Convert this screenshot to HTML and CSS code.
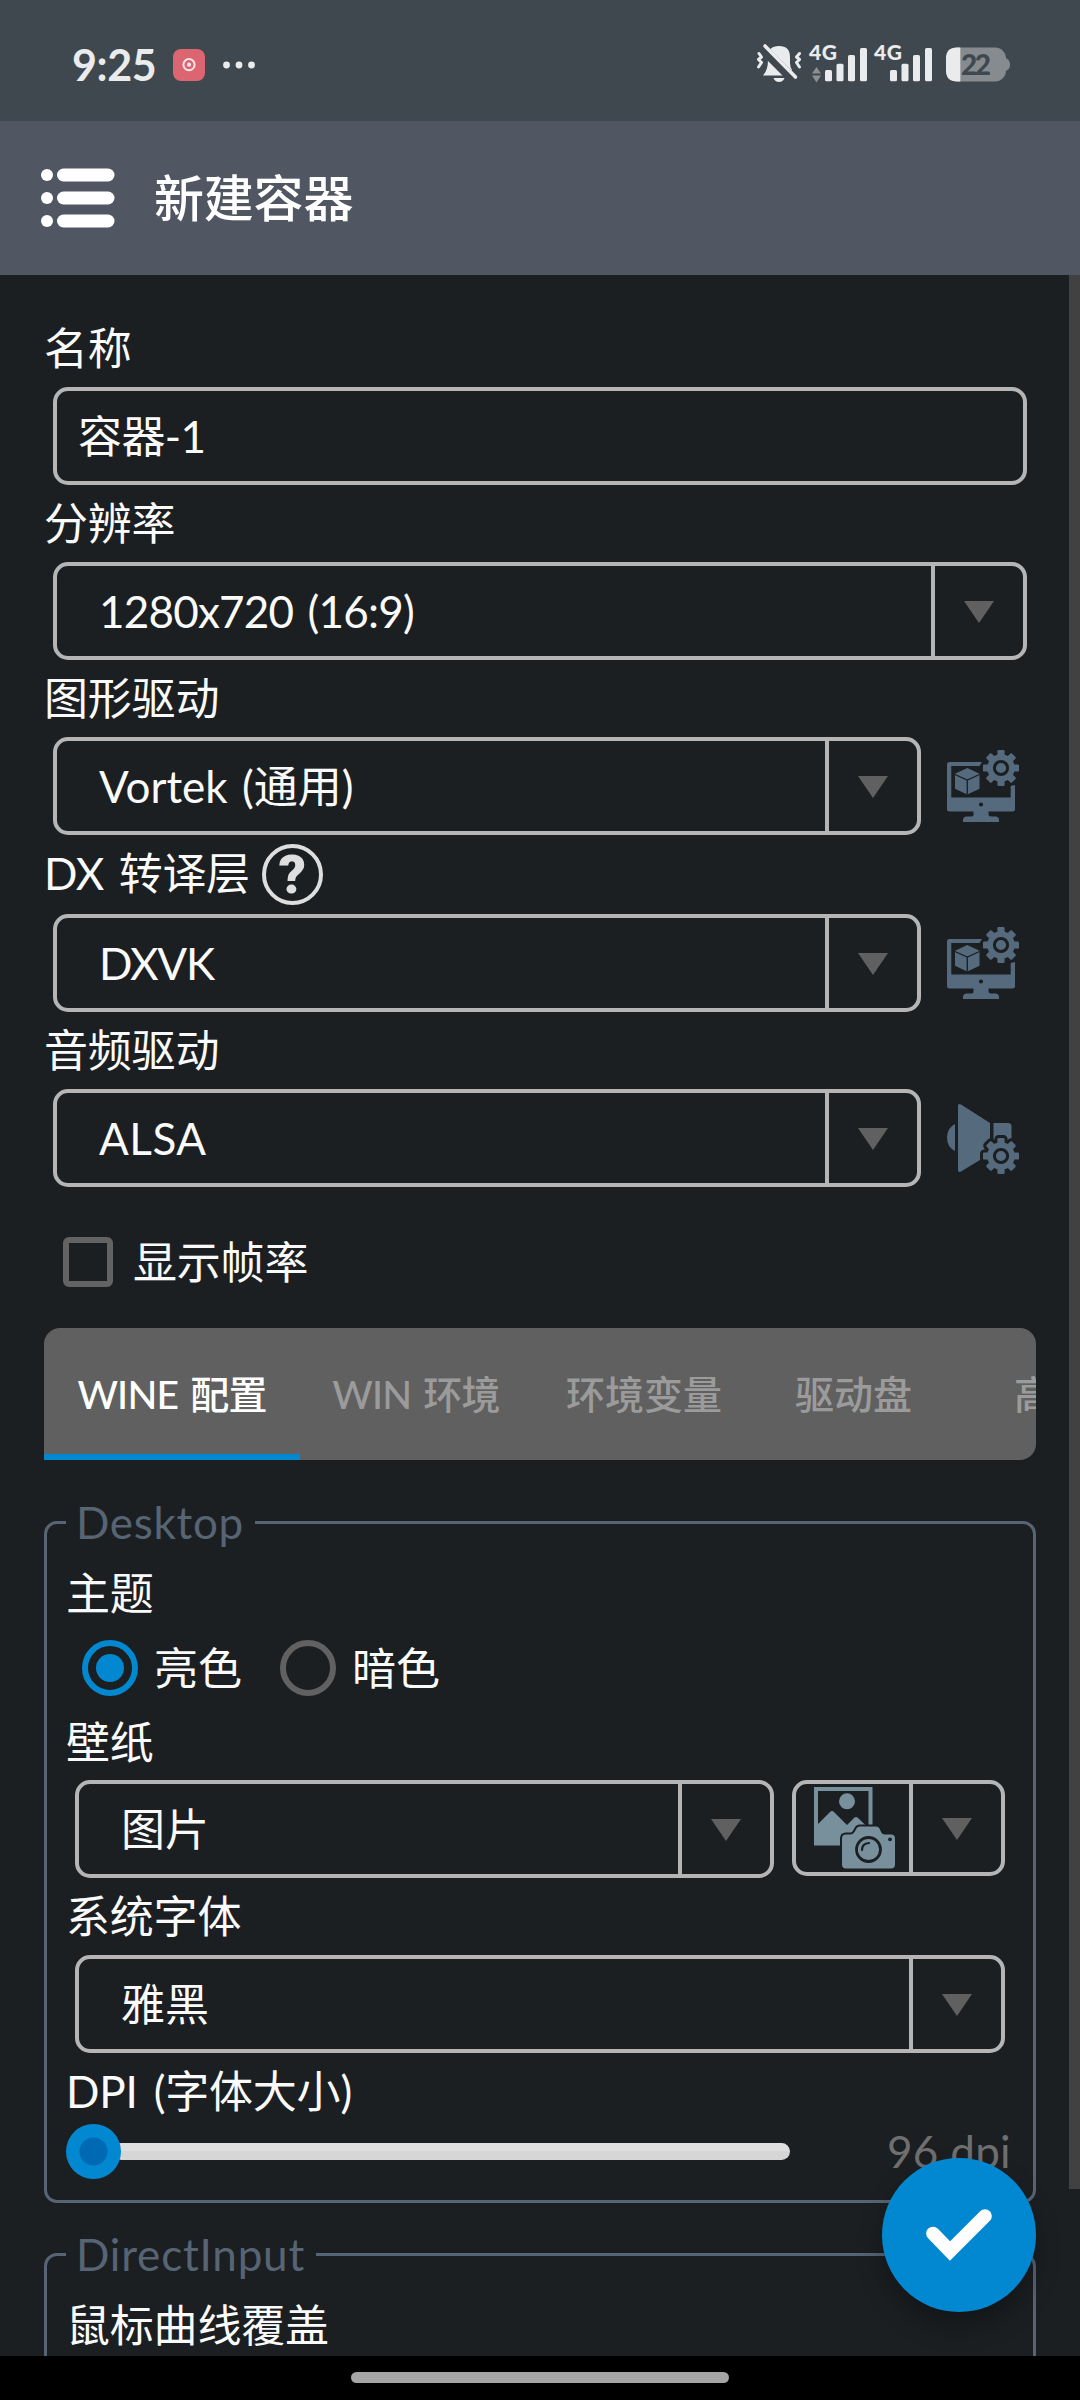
FILE: index.html
```html
<!DOCTYPE html>
<html lang="zh-CN">
<head>
<meta charset="utf-8">
<title>新建容器</title>
<link rel="stylesheet" href="styles.css">
</head>
<body>
<svg class="defs" width="0" height="0">
  <defs>
    <g id="gear">
      <rect x="-3.6" y="-18" width="7.2" height="36" rx="1.2"/>
      <rect x="-3.6" y="-18" width="7.2" height="36" rx="1.2" transform="rotate(45)"/>
      <rect x="-3.6" y="-18" width="7.2" height="36" rx="1.2" transform="rotate(90)"/>
      <rect x="-3.6" y="-18" width="7.2" height="36" rx="1.2" transform="rotate(135)"/>
      <circle r="13.8"/>
      <circle r="6.6" fill="#566a7d" stroke="#1b1f22" stroke-width="3"/>
    </g>
    <symbol id="display-settings" viewBox="0 0 72 72">
      <path d="M2.5 12H35L32.5 16H4.3V47.5H63.7V36L68 35V59Q68 61.5 65.5 61.5H41.5V65Q42 66.500 45 66.500H49Q52 67 52 70V72H16V70Q16 67 19 66.500H23Q26.500 66.500 26.500 65V61.500H2.500Q0 61.500 0 59V14.500Q0 12 2.500 12Z"/>
      <circle cx="34" cy="54.500" r="2.100" fill="#1b1f22"/>
      <path d="M20.300 18L32.500 23.800V38.800L20.300 44.500L8 38.800V23.800Z"/>
      <path d="M8 24.500L20.300 30L32.500 24.500M20.300 30V44.500" fill="none" stroke="#1b1f22" stroke-width="1.300"/>
      <use href="#gear" x="54" y="18"/>
    </symbol>
    <symbol id="audio-settings" viewBox="0 0 72 72">
      <path d="M8 22Q0 26 0 35.500T8 49Z"/>
      <path d="M11 4Q11 1 14 2.500L43 21V54L33 58L14 69.500Q11 71 11 68Z"/>
      <path d="M46.500 21H61Q64.500 21 64.500 24.500V48H46.500Z"/>
      <g fill="#1b1f22" stroke="#1b1f22" stroke-width="6"><use href="#gear" x="54" y="54"/></g>
      <use href="#gear" x="54" y="54"/>
    </symbol>
  </defs>
</svg>

<header class="status">
  <span class="clock">9:25</span>
  <svg class="rec" width="32" height="32" viewBox="0 0 32 32">
    <rect width="32" height="32" rx="8" fill="#db6571"/>
    <circle cx="16" cy="15.700" r="5.600" fill="none" stroke="#f6e4e6" stroke-width="2"/>
    <circle cx="16" cy="15.700" r="2.100" fill="#f6e4e6"/>
  </svg>
  <svg class="more" width="32" height="8" viewBox="0 0 32 8" fill="#e9ebed">
    <circle cx="3.500" cy="4" r="3.400"/><circle cx="16" cy="4" r="3.400"/><circle cx="28.500" cy="4" r="3.400"/>
  </svg>
  <svg class="indicators" width="256" height="52" viewBox="756 36 256 52" fill="#e9ebed">
    <path d="M763 74.500Q768 69 768 59V56Q768 45 779 45T790 56V62Q790 66 792 69V74.500Z"/>
    <path d="M773.500 77H784.500Q783 81 779 81T773.500 77Z"/>
    <path d="M762 47L794 79" stroke="#40484f" stroke-width="10"/>
    <path d="M765 45L795.500 76" stroke="#e9ebed" stroke-width="3.600" stroke-linecap="round"/>
    <path d="M759 52.500L761.500 56L758.500 58.500L761.500 61.500L758.500 66M799.500 52.500L796.500 56L799.500 58.500L796.500 61.500L799.500 66" fill="none" stroke="#e9ebed" stroke-width="3" stroke-linecap="round" stroke-linejoin="round"/>
    <text class="net" x="809" y="58.500" textLength="28">4G</text>
    <path d="M816.500 66L821 72.500H812ZM812 74.500H821L816.500 81.500Z" fill="#8b9094"/>
    <rect x="825" y="69" width="7" height="11.300" rx="1.500"/>
    <rect x="836.500" y="62.700" width="7" height="17.600" rx="1.500"/>
    <rect x="848" y="54" width="7" height="26.300" rx="1.500"/>
    <rect x="860" y="47" width="7" height="33.300" rx="1.500"/>
    <text class="net" x="874" y="58.500" textLength="28">4G</text>
    <rect x="890" y="69" width="7" height="11.300" rx="1.500"/>
    <rect x="901.500" y="62.700" width="7" height="17.600" rx="1.500"/>
    <rect x="913" y="54" width="7" height="26.300" rx="1.500"/>
    <rect x="925" y="47" width="7" height="33.300" rx="1.500"/>
    <rect x="946" y="46.500" width="60" height="34" rx="11" fill="#868b8f"/>
    <path d="M1005 57Q1010 58 1010 63.500T1005 70Z" fill="#868b8f"/>
    <path d="M960.300 46.500H957Q946 46.500 946 57.500V69.500Q946 80.500 957 80.500H960.300Z"/>
    <text class="level" x="961" y="74" textLength="30">22</text>
  </svg>
</header>

<nav class="appbar">
  <svg width="74" height="60" viewBox="0 0 74 60" fill="#fff">
    <circle cx="6" cy="7" r="6"/><circle cx="6" cy="30" r="6"/><circle cx="6" cy="53" r="6"/>
    <rect x="16" y=".5" width="57.500" height="13" rx="6.500"/>
    <rect x="16" y="23.500" width="57.500" height="13" rx="6.500"/>
    <rect x="16" y="46.500" width="57.500" height="13" rx="6.500"/>
  </svg>
  <h1 class="title">新建容器</h1>
</nav>

<main class="page">
  <div class="label">名称</div>
  <div class="box input">容器-1</div>

  <div class="label">分辨率</div>
  <div class="box select"><span class="value w-res">1280x720 (16:9)</span><i class="arrow"></i></div>

  <div class="label">图形驱动</div>
  <div class="row">
    <div class="box select"><span class="value w-vortek">Vortek (通用)</span><i class="arrow"></i></div>
    <svg class="action"><use href="#display-settings"/></svg>
  </div>

  <div class="label tall"><span class="w-dx">DX 转译层</span><span class="help">?</span></div>
  <div class="row">
    <div class="box select"><span class="value w-caps">DXVK</span><i class="arrow"></i></div>
    <svg class="action"><use href="#display-settings"/></svg>
  </div>

  <div class="label">音频驱动</div>
  <div class="row">
    <div class="box select"><span class="value w-alsa">ALSA</span><i class="arrow"></i></div>
    <svg class="action"><use href="#audio-settings"/></svg>
  </div>

  <div class="check"><i class="checkbox"></i>显示帧率</div>

  <div class="tabs">
    <span class="tab t1 active">WINE 配置</span>
    <span class="tab t2">WIN 环境</span>
    <span class="tab t3">环境变量</span>
    <span class="tab t4">驱动盘</span>
    <span class="tab t5">高级</span>
  </div>

  <fieldset class="group">
    <legend class="w-desktop">Desktop</legend>
    <div class="label">主题</div>
    <div class="radios">
      <i class="radio on"></i><span>亮色</span>
      <i class="radio"></i><span>暗色</span>
    </div>
    <div class="label short">壁纸</div>
    <div class="row pair">
      <div class="box select"><span class="value">图片</span><i class="arrow"></i></div>
      <div class="box select picture">
        <svg class="value" width="82" height="83" viewBox="0 0 82 83" fill="#78909c">
          <path fill-rule="evenodd" d="M0 0H58.500V58.500H0ZM4 4V37L16 25Q18 23 20 25L33 38L40 31Q42 29 44 31L54.500 41V4Z"/>
          <circle cx="33" cy="14.300" r="8"/>
          <path stroke="#1b1f22" stroke-width="4" paint-order="stroke" d="M32 47.500H36Q39 47.500 40.500 45L42.500 41.500Q43.500 39.500 46 39.500H62Q64.500 39.500 65.500 41.500L67 45Q68 47.500 71 47.500H77Q81 47.500 81 51.500V77.500Q81 81.500 77 81.500H32Q28 81.500 28 77.500V51.500Q28 47.500 32 47.500Z"/>
          <circle cx="54.500" cy="62.500" r="12" fill="none" stroke="#1b1f22" stroke-width="2.800"/>
          <path d="M48 63Q48 56.500 55 56" fill="none" stroke="#1b1f22" stroke-width="2.200" stroke-linecap="round"/>
          <circle cx="76" cy="52.300" r="1.900" fill="#1b1f22"/>
        </svg>
        <i class="arrow"></i>
      </div>
    </div>
    <div class="label">系统字体</div>
    <div class="box select"><span class="value">雅黑</span><i class="arrow"></i></div>
    <div class="label short w-dpi">DPI (字体大小)</div>
    <div class="slider">
      <i class="thumb"></i><i class="track"></i><span class="amount">96 dpi</span>
    </div>
  </fieldset>

  <fieldset class="group next">
    <legend class="w-direct">DirectInput</legend>
    <div class="label">鼠标曲线覆盖</div>
  </fieldset>

  <i class="scrollbar"></i>
  <div class="fab">
    <svg width="154" height="154" viewBox="0 0 154 154">
      <path d="M51 75.500L68 93L103 58" fill="none" stroke="#fff" stroke-width="13.700" stroke-linecap="round"/>
    </svg>
  </div>
</main>

<footer class="navbar"><i class="handle"></i></footer>
</body>
</html>
```
FILE: styles.css
```css
* { box-sizing: border-box; }

body {
  margin: 0;
  width: 1080px;
  height: 2400px;
  overflow: hidden;
  display: flex;
  flex-direction: column;
  background: #1b1f22;
  color: #fafafa;
  font: 44px/1.2 Lato, "Noto Sans CJK SC", sans-serif;
}

.defs { display: none; }
i { font-style: normal; }

/* status bar */
.status {
  height: 121px;
  display: flex;
  align-items: center;
  padding: 8px 68px 0 72px;
  background: #40484f;
}
.clock {
  width: 101px;
  font-size: 43px;
  font-weight: 700;
  letter-spacing: -.4px;
  color: #e9ebed;
}
.more { margin-left: 18px; }
.indicators { margin: -4px 0 0 auto; overflow: visible; }
.net { font: 900 21px Lato, sans-serif; }
.level { font: 900 28px Lato, sans-serif; fill: #40484f; }

/* app bar */
.appbar {
  height: 154px;
  display: flex;
  align-items: center;
  gap: 39px;
  padding: 0 41px;
  padding-bottom: 1px;
  background: #515762;
}
.title {
  margin: 0;
  font-size: 50px;
  font-weight: 500;
  letter-spacing: -.2px;
  color: #fff;
}

/* form */
.page {
  position: relative;
  flex: 1;
  min-height: 0;
  overflow: hidden;
  padding: 35px 44px 0;
}
.label {
  height: 77px;
  display: flex;
  align-items: center;
  letter-spacing: -.2px;
}
.label.tall { height: 79px; padding-bottom: 2px; }
.label.short { height: 76px; }
.help {
  width: 61px;
  height: 61px;
  margin: 2px 0 0 12px;
  border: 4.500px solid #dedede;
  border-radius: 50%;
  text-align: center;
  font: 900 54px/54px Roboto, sans-serif;
  color: #dedede;
}
.box {
  height: 98px;
  margin: 0 9px;
  border: 4px solid #b5b5b5;
  border-radius: 15px;
  display: flex;
  align-items: center;
}
.input { padding-left: 21px; letter-spacing: -.6px; }
.value { flex: 1; padding-left: 42px; }

/* text tracking per value */
.w-res { letter-spacing: -.8px; word-spacing: 4px; }
.w-vortek { word-spacing: 3px; }
.w-caps { letter-spacing: -1.2px; }
.w-alsa { letter-spacing: .5px; }
.w-dx { letter-spacing: -.4px; word-spacing: 4px; }
.w-dpi { word-spacing: 5px; }
.w-desktop { letter-spacing: .7px; }
.w-direct { letter-spacing: .8px; }

.arrow {
  align-self: stretch;
  width: 92px;
  border-left: 4px solid #b5b5b5;
  display: flex;
  align-items: center;
  justify-content: center;
}
.arrow::after {
  content: "";
  width: 30px;
  height: 22px;
  margin-top: 2px;
  background: #606060;
  clip-path: polygon(0 0, 100% 0, 50% 100%);
}
.row { display: flex; align-items: center; }
.row .box { flex: 1; margin-right: 26px; }
.action { width: 72px; height: 72px; margin-right: 17px; fill: #566a7d; }

.check {
  height: 141px;
  display: flex;
  align-items: center;
  gap: 20px;
  padding: 9px 0 0 19px;
  letter-spacing: -.2px;
}
.checkbox {
  width: 50px;
  height: 50px;
  border: 6px solid #636363;
  border-radius: 6px;
}

/* tabs */
.tabs {
  height: 132px;
  display: flex;
  overflow: hidden;
  border-radius: 16px 16px 16px 0;
  background: #606060;
  font-size: 39px;
  font-weight: 500;
  color: #9b9b9b;
}
.tab {
  flex: none;
  display: flex;
  align-items: center;
  justify-content: center;
  white-space: nowrap;
}
.t1 { width: 256px; letter-spacing: -.8px; word-spacing: 3px; }
.t2 { width: 232px; letter-spacing: -.8px; word-spacing: 3px; }
.t3 { width: 224px; }
.t4 { width: 195px; }
.t5 { width: 204px; }
.tab.active {
  color: #fff;
  padding-top: 6px;
  border-bottom: 6px solid #0288d1;
}

/* groups */
.group {
  margin: 32px 0 0;
  padding: 2px 12px 27px;
  border: 3px solid #566474;
  border-radius: 13px;
  min-width: 0;
}
.group.next { margin-top: 21px; height: 200px; }
legend {
  height: 61px;
  line-height: 60px;
  margin-left: 7px;
  padding: 0 11px 0 10px;
  color: #566474;
  white-space: nowrap;
}
.group .label { padding-left: 7px; }
.group .box { margin: 0 16px; }
.radios {
  height: 72px;
  display: flex;
  align-items: center;
  padding-left: 23px;
}
.radio {
  width: 56px;
  height: 56px;
  border: 6px solid #616161;
  border-radius: 50%;
  display: grid;
  place-items: center;
}
.radios span { margin: 0 38px 0 16px; }
.radio.on { border-color: #0288d1; }
.radio.on::after {
  content: "";
  width: 28px;
  height: 28px;
  border-radius: 50%;
  background: #0288d1;
}
.pair { align-items: flex-start; }
.group .pair .box { margin-right: 18px; }
.group .pair .picture { flex: none; width: 213px; height: 96px; margin: 0 16px 0 0; }
.picture .value { flex: none; width: 82px; padding: 0; margin: 1px 31px 0 18px; }
.picture .arrow { margin-left: -18px; width: 96px; }

.slider {
  height: 44px;
  display: flex;
  align-items: center;
  padding-left: 7px;
}
.thumb {
  flex: none;
  z-index: 1;
  width: 55px;
  height: 55px;
  border-radius: 50%;
  background: radial-gradient(circle, #0069b4 13.500px, #0288d1 14.500px);
}
.track {
  flex: none;
  width: 677px;
  height: 17px;
  margin-left: -8px;
  border-radius: 9px;
  background: linear-gradient(#dfdfdf 50%, #d6d6d6 50%);
}
.amount { margin-left: 97px; color: #6f6f6f; white-space: nowrap; letter-spacing: .3px; }

/* overlays */
.scrollbar {
  position: absolute;
  top: 0;
  right: 0;
  width: 11px;
  height: 1914px;
  background: #414142;
}
.fab {
  position: absolute;
  right: 44px;
  bottom: 44px;
  width: 154px;
  height: 154px;
  border-radius: 50%;
  background: #0288d1;
  box-shadow: 0 14px 26px rgba(0, 0, 0, .28);
}

.navbar {
  height: 44px;
  display: flex;
  justify-content: center;
  padding-top: 16px;
  background: #000;
}
.handle { width: 378px; height: 11px; border-radius: 6px; background: #a5a5a5; }
```
